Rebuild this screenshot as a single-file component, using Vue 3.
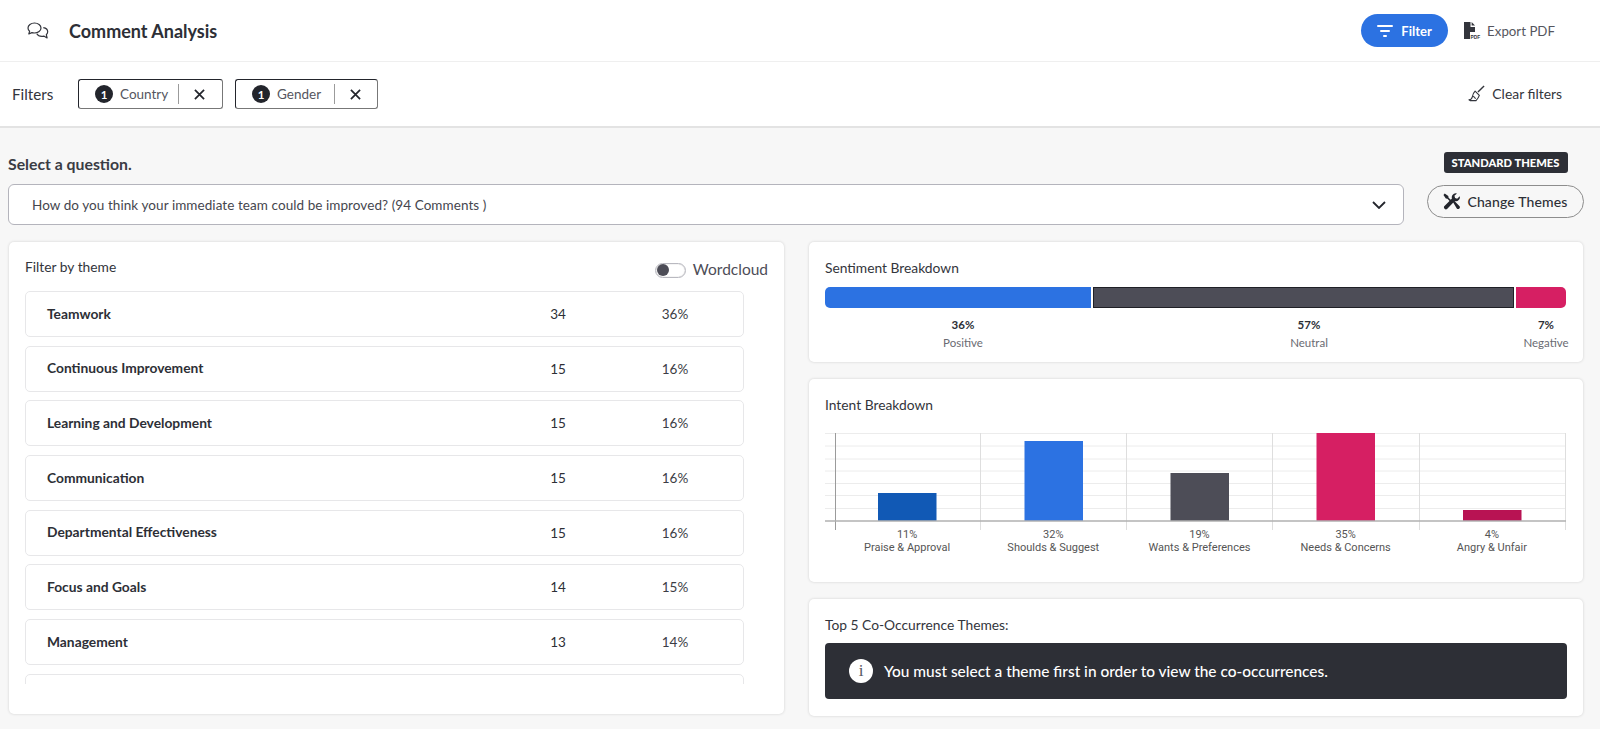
<script setup>
const themes = [
  ['Teamwork', 34, '36%'],
  ['Continuous Improvement', 15, '16%'],
  ['Learning and Development', 15, '16%'],
  ['Communication', 15, '16%'],
  ['Departmental Effectiveness', 15, '16%'],
  ['Focus and Goals', 14, '15%'],
  ['Management', 13, '14%'],
]
const chips = ['Country', 'Gender']
const sentiment = [
  { pct: '36%', name: 'Positive', cls: 'pos' },
  { pct: '57%', name: 'Neutral', cls: 'neu' },
  { pct: '7%', name: 'Negative', cls: 'neg' },
]
const hLines = [0, 12.5, 25.5, 37.5, 50, 62, 75]
const vLines = [10, 155, 301, 447, 594, 740]
const bars = [
  { x: 53, y: 60, h: 28, c: '#1159b5' },
  { x: 199.5, y: 8, h: 80, c: '#2c72e2' },
  { x: 345.5, y: 40, h: 48, c: '#4d4d57' },
  { x: 491.5, y: 0, h: 88, c: '#d61f63' },
  { x: 638, y: 77, h: 11, c: '#b81353' },
]
const intents = [
  ['11%', 'Praise & Approval'],
  ['32%', 'Shoulds & Suggest'],
  ['19%', 'Wants & Preferences'],
  ['35%', 'Needs & Concerns'],
  ['4%', 'Angry & Unfair'],
]
</script>

<template>
  <div class="page">
    <header class="top">
      <svg class="ic-chat" viewBox="0 0 24 20" width="24" height="20" fill="none" stroke="#33353c" stroke-width="1.2" stroke-linejoin="round">
        <path d="M8.500 2C4.900 2 2 4.200 2 7c0 1.300.6 2.400 1.600 3.300L2.800 13l3.100-1.400c.8.3 1.700.4 2.600.4 3.600 0 6.500-2.200 6.500-5S12.100 2 8.500 2z"/>
        <path d="M17.300 6.600c2.500.4 4.400 2.100 4.400 4.200 0 1.100-.5 2.100-1.400 2.900l.8 3.300-3.300-1.900c-.6.2-1.300.3-2 .3-2.200 0-4.100-1-5-2.600"/>
      </svg>
      <h1>Comment Analysis</h1>
      <span class="grow"></span>
      <button class="filter-btn">
        <svg viewBox="0 0 16 12" width="16" height="12" fill="#fff"><rect x="0" y="0" width="16" height="2" rx="1"/><rect x="3" y="5" width="10" height="2" rx="1"/><rect x="6" y="10" width="4" height="2" rx="1"/></svg>
        Filter
      </button>
      <div class="export">
        <svg viewBox="0 0 18 18" width="18" height="18">
          <path d="M1 0h6.500v5H12v5H7v7H1z" fill="#33353c"/>
          <path d="M8.600 0 12 3.600H8.600z" fill="#33353c"/>
          <text x="7.500" y="17" font-size="4.800" font-weight="700" fill="#33353c" font-family="Liberation Sans, sans-serif">PDF</text>
        </svg>
        <span>Export PDF</span>
      </div>
    </header>

    <section class="filters">
      <span class="filters-label">Filters</span>
      <div v-for="c in chips" :key="c" class="chip">
        <span class="num">1</span>
        <span class="chip-name">{{ c }}</span>
        <span class="chip-sep"></span>
        <svg viewBox="0 0 12 12" width="11" height="11" stroke="#23252c" stroke-width="1.900" fill="none"><path d="M1 1l10 10M11 1 1 11"/></svg>
      </div>
      <span class="grow"></span>
      <div class="clear">
        <svg viewBox="0 0 18 18" width="17" height="17" fill="none" stroke="#33353c" stroke-width="1.200" stroke-linejoin="round">
          <path d="M17 1 10.500 7.500" stroke-width="1.500"/>
          <path d="M7.500 6.500 12 11c-.7 2-2 4-3.500 5.500H2.200L1 15.700c2 0 3-1 3.600-3.200.5-2.700 1.700-4.900 2.900-6z"/>
          <path d="M5 12c1.500.5 2.500 1.500 3 2.500"/>
        </svg>
        <span>Clear filters</span>
      </div>
    </section>

    <main class="content">
      <div class="question-row">
        <div class="question-main">
          <div class="select-label">Select a question.</div>
          <div class="select">
            <span>How do you think your immediate team could be improved? (94 Comments )</span>
            <svg viewBox="0 0 14 8" width="14" height="8" fill="none" stroke="#23252c" stroke-width="1.800"><path d="M1 1l6 6 6-6"/></svg>
          </div>
        </div>
        <div class="question-side">
          <span class="badge">STANDARD THEMES</span>
          <button class="themes-btn">
            <svg viewBox="0 0 18 18" width="17" height="17" fill="#23252c">
              <path d="M1.800.6 5.600 3.200l.3 1.700 2.900 2.800-1.300 1.300L4.700 6.200 3 5.800.5 2z"/>
              <path d="M10.500 9.500l1.400-1.300 5.400 5.500c.8.8.8 1.900 0 2.700-.8.800-2 .800-2.700 0z"/>
              <path d="M13.500.3a4.200 4.200 0 0 0-4 5.500L1.300 14a2.200 2.200 0 0 0 3 3l8.200-8.400a4.200 4.200 0 0 0 5.200-5.200L15 6l-2.200-.8-.7-2.200L14.800.5a4 4 0 0 0-1.300-.2z"/>
            </svg>
            Change Themes
          </button>
        </div>
      </div>

      <div class="columns">
        <div class="card left">
          <div class="left-head">
            <span class="card-title">Filter by theme</span>
            <div class="toggle-wrap">
              <span class="toggle"><span class="knob"></span></span>
              <span class="toggle-label">Wordcloud</span>
            </div>
          </div>
          <div class="theme-list">
            <div v-for="t in themes" :key="t[0]" class="theme">
              <span class="theme-name">{{ t[0] }}</span>
              <span class="theme-count">{{ t[1] }}</span>
              <span class="theme-pct">{{ t[2] }}</span>
            </div>
            <div class="theme"></div>
          </div>
        </div>

        <div class="right">
          <div class="card sentiment">
            <div class="card-title">Sentiment Breakdown</div>
            <div class="sent-bar">
              <span v-for="s in sentiment" :key="s.cls" :class="['seg', s.cls]"></span>
            </div>
            <div class="sent-labels">
              <div v-for="s in sentiment" :key="s.name" :class="['sent-label', s.cls]">
                <b>{{ s.pct }}</b>
                <span>{{ s.name }}</span>
              </div>
            </div>
          </div>

          <div class="card intent">
            <div class="card-title">Intent Breakdown</div>
            <svg class="plot" viewBox="0 0 741 97" width="741" height="97">
              <line v-for="y in hLines" :key="y" x1="0" x2="741" :y1="y + 0.5" :y2="y + 0.5" stroke="#ececec"/>
              <line v-for="(x, i) in vLines" :key="x" :x1="x + 0.5" :x2="x + 0.5" y1="0" y2="97" :stroke="i === 0 ? '#9b9b9b' : '#dedede'"/>
              <rect v-for="b in bars" :key="b.x" :x="b.x" :y="b.y" width="58.500" :height="b.h" :fill="b.c"/>
              <line x1="0" x2="741" y1="88" y2="88" stroke="#b0b0b0" stroke-width="1.500"/>
            </svg>
            <div class="intent-labels">
              <div v-for="l in intents" :key="l[1]" class="intent-label">
                <div>{{ l[0] }}</div>
                <div>{{ l[1] }}</div>
              </div>
            </div>
          </div>

          <div class="card cooc">
            <div class="card-title">Top 5 Co-Occurrence Themes:</div>
            <div class="notice">
              <span class="info">i</span>
              <span>You must select a theme first in order to view the co-occurrences.</span>
            </div>
          </div>
        </div>
      </div>
    </main>
  </div>
</template>

<style>
html, body { margin: 0; background: #f7f7f7; overflow: hidden; }
</style>

<style scoped>
.page { width: 1600px; height: 729px; overflow: hidden; font-family: Lato, "Open Sans", sans-serif; color: #2d2f36; background: #f7f7f7; }
.grow { flex: 1; }
.top { height: 62px; box-sizing: border-box; background: #fff; border-bottom: 1px solid #efefef; display: flex; align-items: center; padding: 0 45px 0 26px; }
.ic-chat { margin-right: 19px; }
h1 { margin: 0; font-size: 18px; font-weight: 700; color: #2d2f36; }
.filter-btn { width: 87px; height: 33px; border: 0; border-radius: 17px; background: #2c72e2; color: #fff; font: 700 13px Lato, sans-serif; display: flex; align-items: center; justify-content: center; gap: 8px; margin-right: 15px; padding: 0; }
.export { display: flex; align-items: center; gap: 6px; font-size: 13.300px; color: #55565e; }
.filters { height: 66px; box-sizing: border-box; background: #fff; border-bottom: 2px solid #e3e3e3; display: flex; align-items: center; padding: 0 38px 0 12px; }
.filters-label { font-size: 15.200px; width: 66px; color: #33353c; }
.chip { width: 145px; height: 30px; box-sizing: border-box; border: 1px solid #23252c; border-bottom-color: #777; border-right-color: #777; border-radius: 3px; display: flex; align-items: center; padding-left: 16px; margin-right: 12px; background: #fff; }
.chip + .chip { width: 143px; }
.num { width: 18px; height: 18px; border-radius: 50%; background: #23252c; color: #fff; font-size: 11.500px; font-weight: 700; display: flex; align-items: center; justify-content: center; margin-right: 7px; }
.chip-name { font-size: 13.500px; color: #55565e; margin-right: 10px; }
.chip + .chip .chip-name { margin-right: 13px; }
.chip-sep { width: 1px; height: 20px; background: #9b9b9b; margin-right: 15px; }
.clear { display: flex; align-items: center; gap: 7px; font-size: 13.900px; color: #33353c; padding-bottom: 2px; }
.content { padding: 0 16px 0 8px; }
.question-row { display: flex; gap: 23px; height: 114px; }
.question-main { width: 1396px; padding-top: 26px; box-sizing: border-box; }
.select-label { font-size: 15.800px; font-weight: 700; line-height: 20px; margin-bottom: 10px; color: #3a3c44; }
.select { height: 41px; box-sizing: border-box; background: #fff; border: 1px solid #b4b4bc; border-radius: 6px; display: flex; align-items: center; justify-content: space-between; padding: 0 17px 0 23px; font-size: 13.500px; letter-spacing: .07px; color: #45464e; }
.question-side { width: 157px; padding-top: 24px; display: flex; flex-direction: column; align-items: center; box-sizing: border-box; }
.badge { background: #2d2f36; color: #fff; border-radius: 3px; font-size: 11.200px; font-weight: 900; height: 21px; width: 124px; display: flex; align-items: center; justify-content: center; }
.themes-btn { margin-top: 12px; width: 157px; height: 33px; border: 1px solid #8d8d8d; border-radius: 17px; background: #f7f7f7; font: 500 14px Lato, sans-serif; letter-spacing: .15px; color: #2d2f36; display: flex; align-items: center; justify-content: center; gap: 7px; padding: 0; }
.columns { display: flex; gap: 25px; align-items: flex-start; padding-left: 1px; }
.card { background: #fff; border-radius: 5px; box-shadow: 0 0 3px rgba(0,0,0,.16); box-sizing: border-box; }
.card-title { font-size: 13.800px; color: #33353c; line-height: 16px; }
.left { width: 775px; height: 472px; padding: 17px 16px 0; }
.left-head { display: flex; justify-content: space-between; align-items: flex-start; height: 32px; }
.toggle-wrap { display: flex; align-items: center; gap: 7px; margin-top: 1px; }
.toggle { width: 31px; height: 15px; box-sizing: border-box; border: 1px solid #b9b9c0; border-radius: 8px; display: flex; align-items: center; padding-left: 1px; box-shadow: inset 0 0 1px #999; position: relative; top: 1px; }
.knob { width: 12px; height: 12px; border-radius: 50%; background: #4d4d57; }
.toggle-label { font-size: 15.500px; color: #4d4d57; }
.theme-list { width: 719px; height: 393px; overflow: hidden; display: flex; flex-direction: column; gap: 8.700px; }
.theme { flex: none; height: 46px; box-sizing: border-box; border: 1px solid #e7e7e9; border-radius: 5px; display: flex; align-items: center; padding: 0 0 2px 21px; font-size: 13.500px; }
.theme-name { font-weight: 700; font-size: 13.800px; flex: 1; color: #2d2f36; }
.theme-count { position: relative; width: 60px; text-align: center; margin-right: 57px; top: 1px; }
.theme-pct { position: relative; width: 60px; text-align: center; margin-right: 38px; top: 1px; color: #3c3d45; }
.right { width: 774px; display: flex; flex-direction: column; }
.sentiment { height: 120px; padding: 18px 16px 0; margin-bottom: 17px; }
.sent-bar { display: flex; gap: 2px; height: 21px; margin-top: 11px; }
.seg { display: block; box-sizing: border-box; }
.seg.pos { width: 266px; background: #2c72e2; border-radius: 5px 0 0 5px; }
.seg.neu { width: 421px; background: #4d4d57; border: 1px solid #1f2026; }
.seg.neg { width: 50px; background: #d61f63; border-radius: 0 5px 5px 0; }
.sent-labels { position: relative; height: 40px; margin-top: 8px; }
.sent-label { position: absolute; top: 0; transform: translateX(-50%); display: flex; flex-direction: column; align-items: center; white-space: nowrap; }
.sent-label.pos { left: 138px; }
.sent-label.neu { left: 484px; }
.sent-label.neg { left: 721px; }
.sent-label b { font-size: 11.500px; line-height: 18px; }
.sent-label span { font-size: 11.500px; line-height: 18px; color: #6a6b72; }
.intent { height: 203px; padding: 18px 16px 0; margin-bottom: 17px; }
.plot { display: block; margin-top: 20px; }
.intent-labels { display: grid; grid-template-columns: repeat(5, 146.200px); margin-left: 9px; margin-top: -2px; }
.intent-label { text-align: center; font: 11px/13px Roboto, Arial, sans-serif; color: #555; }
.cooc { height: 117px; padding: 18px 16px 0; }
.notice { margin-top: 10px; height: 56px; background: #2d2f36; border-radius: 4px; color: #fff; display: flex; align-items: center; padding-left: 24px; gap: 11px; font-size: 15.450px; font-weight: 500; }
.info { width: 24px; height: 24px; border-radius: 50%; background: #fff; color: #55565e; font: 17px/24px "Liberation Serif", serif; text-align: center; }
</style>
